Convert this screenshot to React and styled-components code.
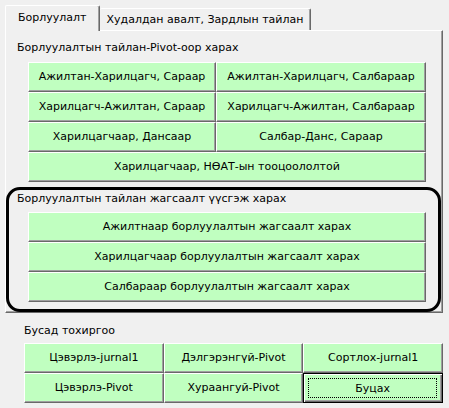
import styled, { createGlobalStyle } from "styled-components";

const GlobalStyle = createGlobalStyle`
  * { box-sizing: border-box; }
  body {
    margin: 0;
    background: #f0f0f0;
    font-family: "DejaVu Sans", Verdana, sans-serif;
    font-size: 11px;
    color: #000;
  }
`;

const Window = styled.div`
  width: 449px;
  height: 408px;
  padding: 5px 0 0 5px;
  background: #f0f0f0;
  overflow: hidden;
`;

const TabStrip = styled.div`
  display: flex;
  align-items: flex-end;
  height: 25px;
  position: relative;
  z-index: 1;
`;

const Tab = styled.div`
  display: flex;
  align-items: center;
  justify-content: center;
  height: ${(p) => (p.$active ? "26px" : "22px")};
  margin-bottom: ${(p) => (p.$active ? "-1px" : "0")};
  padding: ${(p) => (p.$active ? "0 12px 2px 12px" : "0 7px 0 7px")};
  background: #f0f0f0;
  border-top: 1px solid #fff;
  border-left: ${(p) => (p.$active ? "1px solid #fff" : "none")};
  border-right: 1px solid #696969;
  box-shadow: inset -1px 0 #a0a0a0;
  border-radius: 2px 2px 0 0;
  white-space: nowrap;
`;

const Panel = styled.div`
  width: 438px;
  height: 283px;
  border-top: 1px solid #fff;
  border-left: 1px solid #fff;
  border-right: 1px solid #696969;
  border-bottom: 1px solid #696969;
  box-shadow: inset -1px -1px #a0a0a0;
  display: flex;
  flex-direction: column;
`;

const Label = styled.div`
  line-height: 14px;
  margin: ${(p) => p.$margin};
  white-space: nowrap;
`;

const ButtonGrid = styled.div`
  display: grid;
  grid-template-columns: ${(p) => p.$columns};
  grid-auto-rows: 30px;
  width: ${(p) => p.$width};
  margin-left: ${(p) => p.$left};
  margin-top: ${(p) => p.$top};
`;

const GreenButton = styled.button`
  grid-column: span ${(p) => p.$span || 1};
  display: flex;
  align-items: center;
  justify-content: center;
  padding: 0 0 1px 0;
  margin: 0;
  background: #c0ffc0;
  font: inherit;
  color: #000;
  border-top: 1px solid #fff;
  border-left: 1px solid #fff;
  border-right: 1px solid #696969;
  border-bottom: 1px solid #696969;
  box-shadow: inset -1px -1px #a0a0a0;
  white-space: nowrap;
`;

const DefaultButton = styled(GreenButton)`
  padding: 4px;
  border: 1px solid #000;
  box-shadow: inset 1px 1px #fff, inset -1px -1px #696969, inset -2px -2px #a0a0a0;
`;

const FocusRing = styled.span`
  flex: 1;
  align-self: stretch;
  display: flex;
  align-items: center;
  justify-content: center;
  border: 1px dotted #000;
  margin-right: 1px;
`;

const RoundBox = styled.div`
  width: 435px;
  height: 125px;
  margin-top: 5px;
  border: 3px solid #000;
  border-radius: 14px;
  padding-top: 2px;
`;

const pivotButtons = [
  { text: "Ажилтан-Харилцагч, Сараар" },
  { text: "Ажилтан-Харилцагч, Салбараар" },
  { text: "Харилцагч-Ажилтан, Сараар" },
  { text: "Харилцагч-Ажилтан, Салбараар" },
  { text: "Харилцагчаар, Дансаар" },
  { text: "Салбар-Данс, Сараар" },
  { text: "Харилцагчаар, НӨАТ-ын тооцоололтой", span: 2 },
];

const listButtons = [
  "Ажилтнаар борлуулалтын жагсаалт харах",
  "Харилцагчаар борлуулалтын жагсаалт харах",
  "Салбараар борлуулалтын жагсаалт харах",
];

const otherButtons = [
  "Цэвэрлэ-jurnal1",
  "Дэлгэрэнгүй-Pivot",
  "Сортлох-jurnal1",
  "Цэвэрлэ-Pivot",
  "Хураангуй-Pivot",
];

export default function App() {
  return (
    <Window>
      <GlobalStyle />
      <TabStrip>
        <Tab $active>Борлуулалт</Tab>
        <Tab>Худалдан авалт, Зардлын тайлан</Tab>
      </TabStrip>
      <Panel>
        <Label $margin="10px 0 0 11px">Борлуулалтын тайлан-Pivot-оор харах</Label>
        <ButtonGrid $columns="188px 210px" $width="398px" $left="22px" $top="7px">
          {pivotButtons.map((b) => (
            <GreenButton key={b.text} $span={b.span}>
              {b.text}
            </GreenButton>
          ))}
        </ButtonGrid>
        <RoundBox>
          <Label $margin="0 0 0 8px">Борлуулалтын тайлан жагсаалт үүсгэж харах</Label>
          <ButtonGrid $columns="1fr" $width="398px" $left="19px" $top="6px">
            {listButtons.map((t) => (
              <GreenButton key={t}>{t}</GreenButton>
            ))}
          </ButtonGrid>
        </RoundBox>
      </Panel>
      <Label $margin="11px 0 0 19px">Бусад тохиргоо</Label>
      <ButtonGrid $columns="1fr 1fr 1fr" $width="419px" $left="19px" $top="5px">
        {otherButtons.map((t) => (
          <GreenButton key={t}>{t}</GreenButton>
        ))}
        <DefaultButton>
          <FocusRing>Буцах</FocusRing>
        </DefaultButton>
      </ButtonGrid>
    </Window>
  );
}
